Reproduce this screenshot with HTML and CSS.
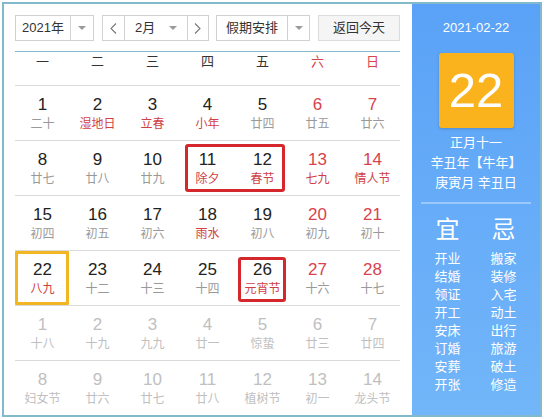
FILE: index.html
```html
<!DOCTYPE html>
<html lang="zh-CN">
<head>
<meta charset="utf-8">
<title>万年历</title>
<link rel="stylesheet" href="styles.css">
</head>
<body>
<div class="cal">
  <div class="main">
    <div class="toolbar">
      <div class="sel year"><span class="txt">2021年</span><span class="arr"><i class="tri"></i></span></div>
      <div class="sel month">
        <span class="nav"><svg width="7" height="11" viewBox="0 0 7 11"><polyline points="6,0.5 1,5.5 6,10.5" fill="none" stroke="#777" stroke-width="1.1"/></svg></span>
        <span class="mlabel"><span>2月</span><i class="tri"></i></span>
        <span class="nav next"><svg width="7" height="11" viewBox="0 0 7 11"><polyline points="1,0.5 6,5.5 1,10.5" fill="none" stroke="#777" stroke-width="1.1"/></svg></span>
      </div>
      <div class="sel hol"><span class="txt">假期安排</span><span class="arr"><i class="tri"></i></span></div>
      <div class="btn">返回今天</div>
    </div>
    <div class="week">
      <span>一</span><span>二</span><span>三</span><span>四</span><span>五</span><span class="red">六</span><span class="red">日</span>
    </div>
    <div class="grid">
      <div class="cell"><div class="n">1</div><div class="l">二十</div></div>
      <div class="cell"><div class="n">2</div><div class="l fes">湿地日</div></div>
      <div class="cell"><div class="n">3</div><div class="l fes">立春</div></div>
      <div class="cell"><div class="n">4</div><div class="l fes">小年</div></div>
      <div class="cell"><div class="n">5</div><div class="l">廿四</div></div>
      <div class="cell we"><div class="n">6</div><div class="l">廿五</div></div>
      <div class="cell we"><div class="n">7</div><div class="l">廿六</div></div>

      <div class="cell"><div class="n">8</div><div class="l">廿七</div></div>
      <div class="cell"><div class="n">9</div><div class="l">廿八</div></div>
      <div class="cell"><div class="n">10</div><div class="l">廿九</div></div>
      <div class="cell"><div class="n">11</div><div class="l fes">除夕</div><span class="mark red2"></span></div>
      <div class="cell"><div class="n">12</div><div class="l fes">春节</div></div>
      <div class="cell we"><div class="n">13</div><div class="l fes">七九</div></div>
      <div class="cell we"><div class="n">14</div><div class="l fes">情人节</div></div>

      <div class="cell"><div class="n">15</div><div class="l">初四</div></div>
      <div class="cell"><div class="n">16</div><div class="l">初五</div></div>
      <div class="cell"><div class="n">17</div><div class="l">初六</div></div>
      <div class="cell"><div class="n">18</div><div class="l fes">雨水</div></div>
      <div class="cell"><div class="n">19</div><div class="l">初八</div></div>
      <div class="cell we"><div class="n">20</div><div class="l">初九</div></div>
      <div class="cell we"><div class="n">21</div><div class="l">初十</div></div>

      <div class="cell"><div class="n">22</div><div class="l fes">八九</div><span class="mark today"></span></div>
      <div class="cell"><div class="n">23</div><div class="l">十二</div></div>
      <div class="cell"><div class="n">24</div><div class="l">十三</div></div>
      <div class="cell"><div class="n">25</div><div class="l">十四</div></div>
      <div class="cell"><div class="n">26</div><div class="l fes">元宵节</div><span class="mark red1"></span></div>
      <div class="cell we"><div class="n">27</div><div class="l">十六</div></div>
      <div class="cell we"><div class="n">28</div><div class="l">十七</div></div>

      <div class="cell nx"><div class="n">1</div><div class="l">十八</div></div>
      <div class="cell nx"><div class="n">2</div><div class="l">十九</div></div>
      <div class="cell nx"><div class="n">3</div><div class="l">九九</div></div>
      <div class="cell nx"><div class="n">4</div><div class="l">廿一</div></div>
      <div class="cell nx"><div class="n">5</div><div class="l">惊蛰</div></div>
      <div class="cell nx"><div class="n">6</div><div class="l">廿三</div></div>
      <div class="cell nx"><div class="n">7</div><div class="l">廿四</div></div>

      <div class="cell nx"><div class="n">8</div><div class="l">妇女节</div></div>
      <div class="cell nx"><div class="n">9</div><div class="l">廿六</div></div>
      <div class="cell nx"><div class="n">10</div><div class="l">廿七</div></div>
      <div class="cell nx"><div class="n">11</div><div class="l">廿八</div></div>
      <div class="cell nx"><div class="n">12</div><div class="l">植树节</div></div>
      <div class="cell nx"><div class="n">13</div><div class="l">初一</div></div>
      <div class="cell nx"><div class="n">14</div><div class="l">龙头节</div></div>
    </div>
  </div>
  <div class="side">
    <div class="date">2021-02-22</div>
    <div class="big">22</div>
    <div class="lunar">
      <div>正月十一</div>
      <div>辛丑年【牛年】</div>
      <div>庚寅月 辛丑日</div>
    </div>
    <div class="sep"></div>
    <div class="yj">
      <div class="col">
        <div class="head">宜</div>
        <div>开业</div><div>结婚</div><div>领证</div><div>开工</div><div>安床</div><div>订婚</div><div>安葬</div><div>开张</div>
      </div>
      <div class="col">
        <div class="head">忌</div>
        <div>搬家</div><div>装修</div><div>入宅</div><div>动土</div><div>出行</div><div>旅游</div><div>破土</div><div>修造</div>
      </div>
    </div>
  </div>
</div>
</body>
</html>
```

FILE: styles.css
```css
* { box-sizing: border-box; }
body {
  margin: 0;
  background: #fff;
  font-family: "Liberation Sans", "Noto Sans CJK SC", sans-serif;
  color: #333;
}
.cal {
  margin: 2px;
  width: 540px;
  height: 415px;
  border: 2px solid #82b9cc;
  display: flex;
}
.main {
  width: 408px;
  padding: 11px 12px 0 11px;
}
.toolbar {
  display: flex;
  height: 26px;
  font-size: 13px;
}
.sel {
  display: flex;
  border: 1px solid #d2d2d2;
  background: #fff;
  height: 26px;
  line-height: 24px;
}
.year { width: 79px; margin-right: 8px; }
.year .txt { width: 54px; text-align: center; }
.month { width: 107px; margin-right: 7px; }
.hol { width: 94px; margin-right: 8px; }
.hol .txt { width: 70px; text-align: center; }
.arr {
  flex: 1;
  border-left: 1px solid #d2d2d2;
  display: flex;
  align-items: center;
  justify-content: center;
}
.tri {
  display: block;
  width: 0;
  height: 0;
  border-left: 4px solid transparent;
  border-right: 4px solid transparent;
  border-top: 4px solid #9a9a9a;
}
.nav {
  width: 21px;
  display: flex;
  align-items: center;
  justify-content: center;
}
.nav.next { width: 20px; border-left: 1px solid #d2d2d2; }
.mlabel {
  width: 63px;
  border-left: 1px solid #d2d2d2;
  display: flex;
  align-items: center;
  justify-content: space-between;
  padding: 0 10px 0 10px;
}
.btn {
  width: 82px;
  height: 26px;
  line-height: 24px;
  border: 1px solid #dcdcdc;
  background: #f5f5f5;
  text-align: center;
}
.week {
  margin-top: 10px;
  border-top: 1px solid #86bbcd;
  height: 34px;
  display: grid;
  grid-template-columns: repeat(7, 55px);
  font-size: 13px;
  line-height: 20px;
  text-align: center;
  color: #333;
}
.week .red { color: #d8434d; }
.grid {
  display: grid;
  grid-template-columns: repeat(7, 55px);
  grid-auto-rows: 55px;
}
.cell {
  position: relative;
  border-top: 1px solid #dadada;
  padding-top: 9px;
  text-align: center;
}
.n {
  font-size: 17px;
  line-height: 20px;
  color: #222;
}
.l {
  font-size: 12px;
  line-height: 18px;
  color: #999;
}
.l.fes { color: #cf3f45; }
.we .n { color: #d8434d; }
.nx .n, .nx .l { color: #c0c0c0; }
.mark {
  position: absolute;
  pointer-events: none;
}
.mark.red2 {
  left: 5px;
  top: 3px;
  width: 100px;
  height: 48px;
  border: 3px solid #d4282c;
  border-radius: 3px;
}
.mark.red1 {
  left: 3px;
  top: 6px;
  width: 48px;
  height: 45px;
  border: 3px solid #d4282c;
  border-radius: 3px;
}
.mark.today {
  left: 0;
  top: 0;
  width: 54px;
  height: 54px;
  border: 3px solid #f3b623;
  border-radius: 1px;
}
.side {
  width: 128px;
  background: linear-gradient(#5aa2f7, #72b6f9);
  color: #fff;
  display: flex;
  flex-direction: column;
  align-items: center;
  padding-top: 14px;
}
.date {
  font-size: 13px;
  line-height: 20px;
}
.big {
  margin-top: 15px;
  width: 75px;
  height: 75px;
  background: #fab31c;
  border-radius: 3px;
  box-shadow: 0 1px 3px rgba(0, 0, 0, 0.18);
  font-size: 49px;
  line-height: 75px;
  text-align: center;
}
.lunar {
  margin-top: 5px;
  font-size: 13px;
  line-height: 20px;
  text-align: center;
}
.sep {
  margin-top: 9px;
  width: 110px;
  height: 2px;
  background: rgba(255, 255, 255, 0.35);
}
.yj {
  margin-top: 11px;
  display: flex;
  gap: 16px;
  margin-right: 1px;
}
.col {
  width: 40px;
  text-align: center;
  font-size: 13px;
  line-height: 18px;
}
.col .head {
  font-size: 24px;
  line-height: 30px;
  margin-bottom: 5px;
}
```
